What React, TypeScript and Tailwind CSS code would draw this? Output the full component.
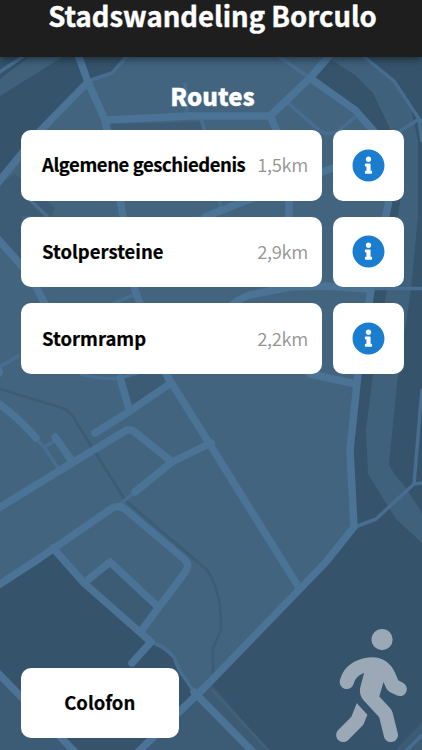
import { FaInfoCircle } from "react-icons/fa";
import { FaPersonWalking } from "react-icons/fa6";

const routes = [
  {
    id: 1,
    name: "Algemene geschiedenis",
    distance: "1,5km",
    tracking: "tracking-[-0.43px]",
  },
  { id: 2, name: "Stolpersteine", distance: "2,9km", tracking: "" },
  { id: 3, name: "Stormramp", distance: "2,2km", tracking: "" },
];

const wideRoads = [
  "M77 52L88 82L105 120L109 140L123 216L135 290L141 306L166 374L298 586",
  "M88 82L40 131L-3 184",
  "M105 120L190 116H270L310 78L331 54",
  "M270 116L280 138",
  "M310 78L355 110L380 138",
  "M389 200L371 290L358 374L350 450L354 527L326 562L208 684L138 752",
  "M232 305Q242 296 255 294L290 287L325 286L370 289",
  "M310 374L356 384",
  "M205 217L240 203L333 168",
  "M289 198V218",
  "M-3 238L30 275L46 306",
  "M-3 509L72 463L125 431Q130 428 136 433L172 462L135 492",
  "M172 462L211 443",
  "M-3 586L40 558L108 511Q118 503 126 510L184 559Q190 564 186 571L141 631",
  "M95 433L130 411L168 385",
  "M120 378L129 409",
  "M-2 403Q20 419 36 438",
  "M55 437L72 461",
  "M53 548L84 583L151 642L132 663",
  "M84 583L110 562L157 606",
  "M-3 672L76 753",
  "M194 692L254 753",
];

const smallRoads = [
  "M-2 73L24 56",
  "M88 81L112 73L128 55",
  "M310 78L278 56",
  "M288 103L320 131Q328 136 338 131L355 117",
  "M185 83L187 114",
  "M201 118L206 135",
  "M362 55L394 81L419 119L424 123",
  "M419 119L397 133",
  "M419 119L422 142",
  "M30 200L48 217",
  "M220 198V209",
  "M370 288.500H422",
  "M136 294L105 307",
  "M-2 368L20 355",
  "M80 374Q104 380 120 378L158 367",
  "M36 439L44 447L58 468",
  "M44 447L55 441",
  "M135 492L118 506",
  "M151 642L163 647L174 657Q179 672 187 681L195 694",
  "M422 483L414 484L376 519L355 527",
  "M414 484L422 389",
  "M405 752L422 735",
];

const MapBackground = () => (
  <svg
    viewBox="0 0 422 750"
    className="absolute inset-0 h-full w-full"
    fill="none"
    strokeLinejoin="round"
    aria-hidden="true"
  >
    <path fill="#42647f" d="M0 0H422V750H0Z" />

    {/* Fields */}
    <path
      fill="#35536a"
      d="M0 50H76L88 81L40 131L0 183ZM78 50H132L112 73L89 80ZM329 50H422V750H268L211 684L326 565L354 529L350 450L358 374L371 290L389 200L380 136L310 78ZM0 587L52 552L84 586L151 643L174 657L195 694L138 750H70L0 675Z"
    />
    <path fill="#42647f" d="M333 200H386L371 290L333 290Z" />
    <path
      fill="#3c5b74"
      d="M0 183L15 174L55 208L52 216L22 216L30 275L0 240ZM89 584L110 564L156 607L141 629ZM125 379L160 366L166 384L132 406ZM0 675L75 750H0ZM195 694L211 684L268 750H140ZM395 750L422 722V750ZM111 124L200 122L203 134H112Z"
    />

    {/* River */}
    <path
      fill="#40617b"
      d="M38 50L0 79V96L66 55ZM322 54L355 75L373 93L385 118L397 145L402 190L394 240L387 290L373 374L366 430L368 474L396 519L422 543V513L404 485Q390 470 389 463L398 374L411 290L418 216V140L410 105L395 80L358 54Z"
    />
    <path
      stroke="#3c5c75"
      strokeWidth="2.500"
      d="M0 389L62 408Q71 411 76 422L90 444L125 500L160 530L207 570Q222 592 221 630L213 648V676"
    />
    <path stroke="#40617b" strokeWidth="3" d="M211 689L268 750" />

    {smallRoads.map((d) => (
      <path key={d} d={d} stroke="#476e90" strokeWidth="3.500" />
    ))}
    {wideRoads.map((d) => (
      <path key={d} d={d} stroke="#4a7396" strokeWidth="7.500" strokeLinecap="round" />
    ))}
    <circle cx="-3" cy="372" r="6" fill="#4a7396" />
  </svg>
);

const App = () => {
  return (
    <div className="relative flex h-[750px] w-full max-w-[422px] flex-col overflow-hidden bg-[#42647f] font-['Noto_Sans_CJK_SC',sans-serif]">
      <MapBackground />

      <header className="relative flex h-[57px] shrink-0 justify-center bg-[#1e1e1f] shadow-[0_2px_8px_rgba(0,0,0,0.5)]">
        <h1 className="whitespace-nowrap pl-[3px] text-[27.5px] font-bold leading-[30px] text-white [-webkit-text-stroke:0.4px_white]">
          Stadswandeling Borculo
        </h1>
      </header>

      <main className="relative flex flex-1 flex-col pl-[21px] pr-[18px]">
        <h2 className="mt-[23px] text-center text-[24px] font-black leading-8 text-white [-webkit-text-stroke:0.3px_white]">
          Routes
        </h2>

        <div className="mt-[18px] flex flex-col gap-4">
          {routes.map((route) => (
            <div key={route.id} className="flex h-[70.67px] gap-[11px]">
              <button className="flex min-w-0 flex-1 items-center justify-between rounded-[10px] bg-white pl-[21px] pr-[14px]">
                <span
                  className={`whitespace-nowrap text-[18.5px] font-bold text-black [-webkit-text-stroke:0.2px_black] ${route.tracking}`}
                >
                  {route.name}
                </span>
                <span className="text-[18.5px] font-[350] tracking-[-0.3px] text-[#949494]">
                  {route.distance}
                </span>
              </button>
              <button
                aria-label="Info"
                className="flex w-[71px] shrink-0 items-center justify-center rounded-[10px] bg-white"
              >
                <FaInfoCircle className="size-[33px] text-[#1a7dcf]" />
              </button>
            </div>
          ))}
        </div>

        <button className="mb-[11.67px] mt-auto h-[70.67px] w-[157.500px] rounded-[10px] bg-white text-[18.5px] font-bold text-black [-webkit-text-stroke:0.2px_black]">
          Colofon
        </button>
      </main>

      <FaPersonWalking className="absolute bottom-2 right-[15px] h-[113px] w-[71px] text-[#9ba9b7]" />
    </div>
  );
};

export default App;
